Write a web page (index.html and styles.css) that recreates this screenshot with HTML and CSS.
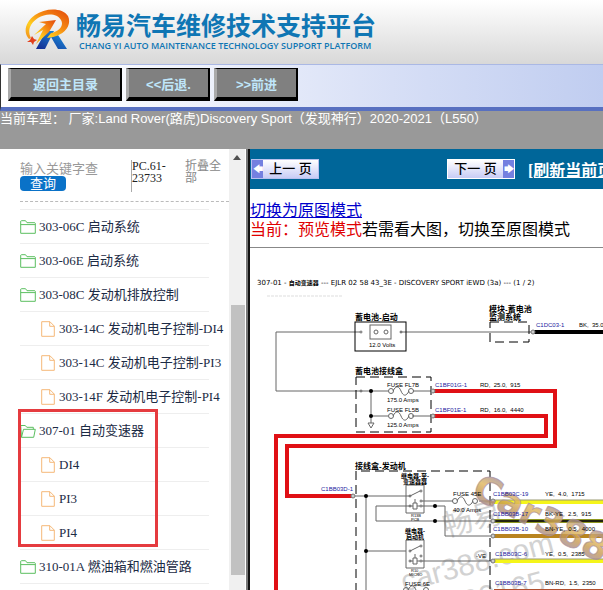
FILE: index.html
```html
<!DOCTYPE html>
<html lang="zh-CN">
  <head>
    <meta charset="UTF-8" />
    <meta name="viewport" content="width=device-width, initial-scale=1.0" />
    <title>畅易汽车维修技术支持平台</title>
    <link rel="stylesheet" href="styles.css">
  </head>
  <body>
    <!-- shared icons -->
    <svg class="sprite" aria-hidden="true">
      <symbol id="folder" viewBox="0 0 16 14">
        <path d="M.7 13.3V1.2L1.5.7h4l1.5 2h7.8l.5.6v10zM.7 4.6h14.6" />
      </symbol>
      <symbol id="folder-open" viewBox="0 0 16 14">
        <path d="M1.5 13.3L.7 1.5h4.6l1.5 1.8h6.5v2M1.5 13.3l2-8h11.8l-1.6 8z" />
      </symbol>
      <symbol id="file" viewBox="0 0 14 16">
        <path d="M.7.7h8.2l4.4 4.4v10.2H.7zM8.7.7v4.6h4.6" />
      </symbol>
    </svg>

    <header class="header">
      <svg class="logo" viewBox="0 0 46 42" aria-hidden="true">
        <defs>
          <linearGradient id="fire" x1="0" y1="1" x2="1" y2="0">
            <stop offset="0" stop-color="#f08a1c" />
            <stop offset=".3" stop-color="#ffcf1f" />
            <stop offset=".6" stop-color="#f58a12" />
            <stop offset="1" stop-color="#e2480c" />
          </linearGradient>
          <linearGradient id="sea" x1="0" y1="1" x2="1" y2="0">
            <stop offset="0" stop-color="#15288f" />
            <stop offset="1" stop-color="#1b9be6" />
          </linearGradient>
        </defs>
        <path fill="url(#sea)" d="M22 22h8l-9 18h-9zM27 28l7-2 9 14h-9z" />
        <path fill="url(#fire)" d="M5 30C-1 24 1 13 11 6 21-1 38-2 44 7c4 9-3 18-15 21l-6 1 4-5c9-2 13-8 10-13C33 4 22 4 14 9 6 14 3 22 7 29z" />
        <path fill="url(#fire)" d="M15 13l17-2-7 12-13 12 7-14-9 5 12-11z" />
        <path fill="#e2401c" d="M8 27l2 3 3 1-3 2-1 3-2-3-4 0 3-2z" />
      </svg>
      <div class="brand">
        <h1>畅易汽车维修技术支持平台</h1>
        <p>CHANG YI AUTO MAINTENANCE TECHNOLOGY SUPPORT PLATFORM</p>
      </div>
    </header>

    <nav class="toolbar">
      <button class="nav-button wide">返回主目录</button>
      <button class="nav-button">&lt;&lt;后退.</button>
      <button class="nav-button">&gt;&gt;前进</button>
    </nav>

    <div class="vehicle">当前车型： 厂家:Land Rover(路虎)Discovery Sport（发现神行）2020-2021（L550）</div>

    <main class="panes">
      <aside class="sidebar">
        <div class="tree-pane">
          <form class="search">
            <div class="search-field">
              <input type="text" placeholder="输入关键字查" aria-label="输入关键字查" />
              <button type="button">查询</button>
            </div>
            <span class="code">PC.61-23733</span>
            <a class="collapse" href="#">折叠全部</a>
          </form>
          <ul class="tree">
            <li><a href="#"><svg class="folder"><use href="#folder" /></svg>303-06C 启动系统</a></li>
            <li><a href="#"><svg class="folder"><use href="#folder" /></svg>303-06E 启动系统</a></li>
            <li>
              <a href="#"><svg class="folder"><use href="#folder" /></svg>303-08C 发动机排放控制</a>
              <ul>
                <li><a href="#"><svg class="file"><use href="#file" /></svg>303-14C 发动机电子控制-DI4</a></li>
                <li><a href="#"><svg class="file"><use href="#file" /></svg>303-14C 发动机电子控制-PI3</a></li>
                <li><a href="#"><svg class="file"><use href="#file" /></svg>303-14F 发动机电子控制-PI4</a></li>
              </ul>
            </li>
            <li class="marked">
              <a href="#"><svg class="folder"><use href="#folder-open" /></svg>307-01 自动变速器</a>
              <ul>
                <li><a href="#"><svg class="file"><use href="#file" /></svg>DI4</a></li>
                <li><a href="#"><svg class="file"><use href="#file" /></svg>PI3</a></li>
                <li><a href="#"><svg class="file"><use href="#file" /></svg>PI4</a></li>
              </ul>
            </li>
            <li><a href="#"><svg class="folder"><use href="#folder" /></svg>310-01A 燃油箱和燃油管路</a></li>
          </ul>
        </div>
        <div class="scrollbar">
          <div class="arrow"></div>
          <div class="thumb"></div>
        </div>
      </aside>

      <section class="viewer">
        <div class="pager">
          <button class="page-button"><span class="tip">🡄</span><span class="label">上一 页</span></button>
          <button class="page-button next"><span class="label">下一 页</span><span class="tip">🡆</span></button>
          <a class="refresh" href="#">[刷新当前页面]</a>
        </div>
        <div class="mode">
          <a href="#">切换为原图模式</a>
          <p><span>当前：预览模式</span>若需看大图，切换至原图模式</p>
        </div>

        <svg class="diagram" viewBox="250 248 640 480" role="img" aria-label="自动变速器电路图">
          <defs>
            <linearGradient id="gold" x1="0" y1="0" x2="0" y2="1">
              <stop offset="0" stop-color="#8b7cae" />
              <stop offset=".4" stop-color="#e0b65c" />
              <stop offset=".6" stop-color="#c79a50" />
              <stop offset="1" stop-color="#8c7fc0" />
            </linearGradient>
            <symbol id="fuse" viewBox="0 0 26 10" overflow="visible">
              <circle cx="3" cy="5" r="2.5" />
              <circle cx="23" cy="5" r="2.5" />
              <path d="M5 5C8-1 11 0 13 5s5 6 8 0" />
            </symbol>
            <symbol id="relay" viewBox="0 0 18 28" overflow="visible">
              <path d="M0 0h18v28H0zM4 11L14 6M9 14v4M7 18h4v6H7zM4 21h3M11 21h3" />
              <circle cx="4" cy="11" r="1" />
              <circle cx="15" cy="6" r="1" />
              <circle cx="15" cy="16" r="1" />
              <circle cx="4" cy="21" r="1" />
              <circle cx="15" cy="21" r="1" />
            </symbol>
          </defs>

          <text class="title" x="257" y="285">307-01 - <tspan class="cjk">自动变速器</tspan> --- EJLR 02 58 43_3E - DISCOVERY SPORT iEWD (3a) --- (1 / 2)</text>
          <path class="faint" d="M267 296h75" />

          <!-- watermark -->
          <g class="watermark">
            <text transform="translate(446 537) rotate(-15)">畅易</text>
            <text transform="translate(404 592) rotate(-15)">car388.com</text>
            <text transform="translate(466 612) rotate(-15)">00165</text>
          </g>

          <!-- thin wires -->
          <g class="thin">
            <path d="M360 332H276v59h97M400 332h131M413 391h20M412 416h20M371 391v32M368 423h6l-3 5zM371 416h17M370 391h18" />
            <path d="M353 496h57M366 496v100M366 551h40M410 506h-34v15h117M422 501h31M422 506h23v30h48M422 561h71M479 501h14" />
            <rect x="370" y="325" width="21" height="14" />
            <circle cx="376" cy="332" r="2" />
            <circle cx="386" cy="332" r="2" />
            <circle cx="361" cy="332" r="1" />
            <circle cx="401" cy="332" r="1" />
            <circle cx="361" cy="391" r="1" />
            <use href="#fuse" x="388" y="386" width="26" height="10" />
            <use href="#fuse" x="388" y="411" width="26" height="10" />
            <use href="#fuse" x="452" y="496" width="26" height="10" />
            <use href="#fuse" x="403" y="585" width="26" height="10" />
            <use href="#relay" x="406" y="485" width="18" height="28" />
            <use href="#relay" x="406" y="540" width="18" height="28" />
          </g>
          <g class="dots">
            <circle cx="371" cy="391" r="2" />
            <circle cx="371" cy="416" r="2" />
            <circle cx="366" cy="496" r="2" />
            <circle cx="366" cy="551" r="2" />
            <circle cx="435" cy="506" r="2" />
            <circle cx="435" cy="521" r="2" />
          </g>

          <rect class="box" x="355" y="322" width="51" height="29" />
          <path class="dashed" d="M356 377h75v55h-75zM490 322h39v20h-39zM356 620V471h134v149" />

          <!-- coloured wires -->
          <path class="wire black" d="M534 332h160" />
          <path class="wire red" d="M433 391h122v55H287v50h66" />
          <path class="wire red" d="M433 416h113v20H276v170" />
          <path class="wire yellow" d="M494 502h200M494 561h200" />
          <path class="wire olive" d="M494 521h200" />
          <path class="wire brown" d="M494 536h200" />
          <path class="wire rust" d="M494 591h200" />
          <path class="edge" d="M494 500h200M494 559h200" />
          <path class="core" d="M494 521h200" />
          <g class="pins">
            <circle cx="533" cy="332" r="2" />
            <circle cx="433" cy="391" r="2" />
            <circle cx="433" cy="416" r="2" />
            <circle cx="353" cy="496" r="2" />
            <circle cx="493" cy="501" r="2" />
            <circle cx="493" cy="521" r="2" />
            <circle cx="493" cy="536" r="2" />
            <circle cx="493" cy="561" r="2" />
          </g>

          <text class="stamp" transform="translate(470 496) rotate(27)">Car388</text>

          <g class="part">
            <text x="355" y="320">蓄电池-启动</text>
            <text x="489" y="312">模块-蓄电池</text>
            <text x="489" y="320">监测系统</text>
            <text x="355" y="374">蓄电池接线盒</text>
            <text x="355" y="469">接线盒-发动机</text>
          </g>
          <g class="part small">
            <text x="415" y="478">继电器-至-</text>
            <text x="415" y="484">变速器器</text>
            <text x="415" y="533">继电器-</text>
            <text x="415" y="539">启动机</text>
          </g>
          <g class="note">
            <text x="369" y="347">12.0 Volts</text>
            <text x="387" y="387">FUSE FL7B</text>
            <text x="387" y="402">175.0 Amps</text>
            <text x="387" y="412">FUSE FL5B</text>
            <text x="387" y="427">125.0 Amps</text>
            <text x="453" y="496">FUSE 45E</text>
            <text x="453" y="512">40.0 Amps</text>
            <text x="405" y="586">FUSE 6E</text>
            <text x="476" y="558">-VE</text>
            <text x="579" y="327">BK,&#160; 35.0,&#160; 1285</text>
            <text x="480" y="387">RD,&#160; 25.0,&#160; 915</text>
            <text x="480" y="412">RD,&#160; 16.0,&#160; 4440</text>
            <text x="545" y="496">YE,&#160; 4.0,&#160; 1715</text>
            <text x="545" y="516">BK-YE,&#160; 2.5,&#160; 915</text>
            <text x="545" y="531">BN-YE,&#160; 0.5,&#160; 4000</text>
            <text x="545" y="556">YE,&#160; 0.5,&#160; 2385</text>
            <text x="545" y="585">BN-RD,&#160; 1.5,&#160; 2350</text>
          </g>
          <g class="tiny">
            <text x="411" y="517">R13B</text>
            <text x="411" y="521">PCB</text>
            <text x="411" y="572">R10</text>
            <text x="409" y="576">MICRO</text>
          </g>
          <g class="connector">
            <text x="536" y="327">C1DC03-1</text>
            <text x="435" y="387">C1BF01G-1</text>
            <text x="435" y="412">C1BF01E-1</text>
            <text x="321" y="491">C1BB03D-1</text>
            <text x="493" y="496">C1BB03C-19</text>
            <text x="493" y="516">C1BB03B-17</text>
            <text x="493" y="531">C1BB03B-10</text>
            <text x="495" y="556">C1BB03C-6</text>
            <text x="495" y="585">C1BB03B-7</text>
          </g>
        </svg>
      </section>
    </main>
  </body>
</html>
```
FILE: styles.css
```css
* {
  box-sizing: border-box;
}

body {
  margin: 0;
  height: 100vh;
  display: flex;
  flex-direction: column;
  overflow: hidden;
  background-color: white;
  font-family: "Liberation Serif", "Noto Sans CJK SC", serif;
}

h1,
p,
ul {
  margin: 0;
  padding: 0;
  font-weight: normal;
}

button {
  padding: 0;
  font-family: "Liberation Sans", "Noto Sans CJK SC", sans-serif;
  cursor: pointer;
}

.sprite {
  display: none;
}

.header {
  display: flex;
  align-items: center;
  flex: none;
  height: 64px;
  padding: 0 24px 4px;
  gap: 6px;
  background: linear-gradient(white, #d8d8d8);
}

.logo {
  width: 46px;
  height: 42px;
}

.brand {
  color: #0f76b4;
  white-space: nowrap;
}

.brand h1 {
  font: bold 25px/32px "Noto Sans CJK SC", sans-serif;
}

.brand p {
  padding-left: 3px;
  font: 600 9px/12px "Open Sans", sans-serif;
}

.toolbar {
  display: flex;
  flex: none;
  gap: 4px;
  height: 47px;
  padding: 3px 7px;
  border-top: 1px solid #aab8e4;
  border-bottom: 4px solid #5870c0;
  border-left: 1px solid #333;
  background: linear-gradient(90deg, white 10%, #d7dff6 65%, #c0cdf0);
}

.nav-button {
  width: 84px;
  height: 33px;
  border: solid black;
  border-width: 1px 2px 4px 3px;
  border-left-color: #aaa;
  background-color: #808080;
  color: #bfe6fa;
  font-size: 13px;
  font-weight: bold;
}

.nav-button.wide {
  width: 114px;
}

.vehicle {
  flex: none;
  height: 38px;
  overflow: hidden;
  background-color: #999;
  color: white;
  font: 13px/15px "Liberation Sans", "Noto Sans CJK SC", sans-serif;
  white-space: nowrap;
}

.panes {
  display: flex;
  flex: 1;
  min-height: 0;
}

.sidebar {
  display: flex;
  flex: none;
  width: 250px;
  border-right: 2px solid #111;
  box-shadow: inset -2px 0 #777;
}

.tree-pane {
  flex: 1;
  min-width: 0;
  padding-left: 20px;
  overflow: hidden;
}

.search {
  display: flex;
  height: 53px;
  padding-top: 11px;
  border-bottom: 1px dashed #bbb;
  font-size: 12px;
  line-height: 12px;
}

.search-field {
  width: 111px;
}

.search input {
  display: block;
  width: 100%;
  height: 16px;
  padding: 0;
  border: 0;
  background: none;
  font: 13px/16px "Noto Sans CJK SC", sans-serif;
}

.search input::placeholder {
  color: #999;
}

.search button {
  display: block;
  width: 46px;
  height: 15px;
  border: 0;
  border-radius: 4px;
  background-color: #0a72c8;
  color: white;
  font-size: 13px;
  line-height: 15px;
}

.code {
  width: 54px;
  height: 32px;
  border-left: 1px solid #aaa;
  color: #222;
}

.collapse {
  width: 40px;
  color: #888;
  text-decoration: none;
}

.tree {
  margin-top: 7px;
  list-style: none;
}

.tree ul {
  list-style: none;
}

.tree a {
  display: flex;
  align-items: center;
  gap: 3px;
  width: 189px;
  height: 34px;
  border-top: 1px solid #eee;
  color: #1c2b45;
  font-size: 13px;
  line-height: 20px;
  text-decoration: none;
  white-space: nowrap;
}

.tree ul a {
  padding-left: 21px;
}

.tree > li:last-child > a {
  height: 35px;
  border-bottom: 1px solid #eee;
}

.tree svg {
  flex: none;
  fill: none;
}

.folder {
  width: 16px;
  height: 14px;
  stroke: #5cbf60;
}

.file {
  width: 14px;
  height: 16px;
  margin-right: 1px;
  stroke: #f5b878;
}

.marked {
  position: relative;
}

.marked::after {
  content: "";
  position: absolute;
  inset: -4px 71px 2px -2px;
  border: 3px solid #e53b3f;
  pointer-events: none;
}

.scrollbar {
  width: 16px;
  margin-right: 3px;
  background-color: #f0f0f0;
}

.arrow {
  width: 8px;
  height: 5px;
  margin: 6px 4px 145px;
  background-color: #505050;
  clip-path: polygon(50% 0, 100% 100%, 0 100%);
}

.thumb {
  width: 14px;
  height: 270px;
  margin-left: 2px;
  background-color: #c1c1c1;
}

.viewer {
  flex: 1;
  min-width: 0;
  overflow: hidden;
}

.pager {
  display: flex;
  align-items: center;
  height: 40px;
  padding-left: 1px;
  background-color: #006699;
}

.page-button {
  display: flex;
  flex: none;
  align-items: stretch;
  width: 68px;
  height: 20px;
  border: 1px solid #b8c0ee;
  background: linear-gradient(white, #c8ccf6);
  color: black;
  font-size: 13px;
  line-height: 17px;
}

.page-button.next {
  margin: 0 13px 0 128px;
  border-color: white;
}

.page-button .label {
  flex: 1;
  font-weight: 500;
}

.page-button .tip {
  width: 11px;
  background-color: #7480e0;
  color: white;
  font-size: 10px;
}

.refresh {
  flex: none;
  color: white;
  font-size: 16px;
  font-weight: bold;
}

.mode {
  padding: 12px 0 8px;
  border-bottom: 1px solid #888;
  font-size: 16px;
  line-height: 19px;
  white-space: nowrap;
}

.mode a {
  display: block;
  color: #0000cc;
}

.mode span {
  color: #e00000;
}

.diagram {
  display: block;
  width: 640px;
  height: 480px;
  font-family: "Liberation Sans", "Noto Sans CJK SC", sans-serif;
}

.diagram .title {
  font: 7px "DejaVu Sans", sans-serif;
}

.diagram .cjk {
  font: bold 6px "Noto Sans CJK SC", sans-serif;
}

.faint {
  stroke: #ddd;
  stroke-dasharray: 3 1;
}

.watermark {
  fill: #d2d2d2;
  font-size: 30px;
}

.thin {
  fill: none;
  stroke: #666;
  stroke-width: 1;
}

.box {
  fill: none;
  stroke: black;
}

.dashed {
  fill: none;
  stroke: black;
  stroke-dasharray: 9 5;
}

.wire {
  fill: none;
  stroke-width: 4;
}

.black {
  stroke: black;
}

.red {
  stroke: #e01015;
}

.yellow {
  stroke: #f5f51a;
}

.olive {
  stroke: #8f9820;
}

.brown {
  stroke: #b98420;
}

.rust {
  stroke: #b05030;
}

.edge {
  stroke: #999970;
}

.core {
  stroke: #222210;
  stroke-width: 2;
}

.pins {
  fill: #ccc;
  stroke: #777;
}

.part {
  font-size: 8px;
  font-weight: bold;
}

.part.small {
  font-size: 6px;
  text-anchor: middle;
}

.note,
.connector {
  font-size: 6px;
}

.connector {
  fill: #2222a0;
}

.tiny {
  font-size: 4px;
}

.stamp {
  fill: url(#gold);
  fill-opacity: 0.8;
  stroke: #a88fa0;
  stroke-opacity: 0.7;
  font: bold 37px "DejaVu Sans", sans-serif;
}
```
